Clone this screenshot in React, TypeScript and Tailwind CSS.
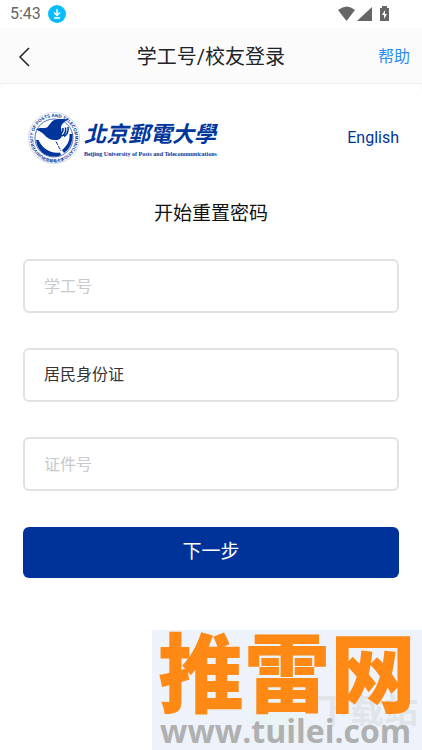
import React from 'react';

const SealLogo: React.FC = () => (
  <svg viewBox="0 0 52 52" className="size-[52px] shrink-0 overflow-visible" role="img" aria-label="BUPT">
    <defs>
      <path id="seal-top" d="M15.500 44.200 A21 21 0 1 1 36.500 44.200" />
      <path id="seal-bottom" d="M13.500 47 A24.500 24.500 0 0 0 38.500 47" />
    </defs>
    <circle cx="26" cy="26" r="25.500" fill="none" stroke="#9fb4dd" strokeWidth="0.500" />
    <text fill="#00369b" fontFamily="Liberation Sans Narrow, Liberation Sans, sans-serif" fontSize="4.500" fontWeight="700">
      <textPath href="#seal-top">UNIVERSITY OF POSTS AND TELECOMMUNICATIONS</textPath>
    </text>
    <text fill="#00369b" fontFamily="Noto Sans CJK SC, sans-serif" fontSize="4" fontWeight="700">
      <textPath href="#seal-bottom">北京邮电大学</textPath>
    </text>
    <circle cx="26" cy="26" r="19" fill="none" stroke="#00369b" strokeWidth="0.700" />
    <path
      fill="#00369b"
      d="M8 17.500 C12 15 16 16.500 19 15.500 C22 13 23 8.500 28 7.500 C33 6.500 37 7.500 41 7 C37.500 9 34 11 33 15 L34 23 C34 26 31 28 28 28 C23 28.500 19 26 16 22.500 C14 20 11 19 8 17.500Z"
    />
    <path
      fill="none"
      stroke="#00369b"
      strokeWidth="1.500"
      d="M33 21.500 Q35.500 19.500 35 16 M34 24 Q38.500 21.500 37.500 15.500 M36 24.500 Q41 21.500 40 15"
    />
    <path
      fill="#00369b"
      d="M8 28 C9 38 16 44.500 26 44.500 C29 44.500 31 44 33 43 L32 40.500 C22 42 14 36 10.500 28Z M41.500 22 L44.500 22 C45 30 42 37 36 41 L34 38 C39 34 42 29 41.500 22Z"
    />
    <path stroke="#00369b" strokeWidth="1" d="M28 29.500 L33 39" strokeDasharray="4 1" />
  </svg>
);

const StatusBar: React.FC = () => (
  <div className="flex h-7 items-center justify-between bg-white pl-[10px] pr-[32px]">
    <div className="flex items-center gap-[7px]">
      <span className="font-[Roboto,sans-serif] text-base text-[#666666]">5:43</span>
      <svg viewBox="0 0 18 18" className="size-[18px]">
        <circle cx="9" cy="9" r="9" fill="#08bdff" />
        <path d="M9 4v6M6 7.500l3 3 3-3M6 13h6" fill="none" stroke="#fff" strokeWidth="1.400" />
      </svg>
    </div>
    <svg viewBox="0 0 52 16" className="h-4 w-[52px]" fill="#666666">
      <path d="M0 4 Q9 -3 17 4 L8.500 15Z" />
      <path d="M34 1 V15 H19Z" />
      <path d="M44 0h5v2h2v13h-9V2h2Z" />
      <path d="M47 4l-3 5h2v4l3-5h-2Z" fill="#fff" />
    </svg>
  </div>
);

const fieldClass =
  'block h-[54px] w-full appearance-none rounded-md border-2 border-[#e2e2e2] bg-white px-[19px] text-base text-[#333333] outline-none placeholder:text-[#c8c9cc]';

const App: React.FC = () => {
  return (
    <div className="flex min-h-screen flex-col bg-[#fbfbfb] font-[Roboto,'Noto_Sans_CJK_SC',sans-serif]">
      <StatusBar />
      <header className="grid h-14 grid-cols-[1fr_auto_1fr] items-center border-b border-[#f0f0f0] bg-[#fbfbfb] px-3 pt-[2px]">
        <button type="button" aria-label="返回" className="justify-self-start px-[6px]">
          <svg viewBox="0 0 12 20" className="h-5 w-3" fill="none" stroke="#222" strokeWidth="1.500">
            <path d="M11 1 L2 10 L11 19" />
          </svg>
        </button>
        <h1 className="text-[20px] text-[#202329]">学工号/校友登录</h1>
        <a href="#help" className="justify-self-end text-base text-[#2c8df4]">帮助</a>
      </header>

      <main className="relative flex-1 rounded-t-lg bg-white px-[23px] pt-7">
        <div className="flex items-center justify-between">
          <div className="flex items-start gap-1 pl-[5px] text-[#00369b]">
            <SealLogo />
            <div className="whitespace-nowrap pt-1">
              <div className="font-['Noto_Sans_CJK_TC',sans-serif] text-[22px] font-bold italic leading-8">北京郵電大學</div>
              <div className="font-['Liberation_Serif',serif] text-[6px] font-bold leading-3">
                Beijing University of Posts and Telecommunications
              </div>
            </div>
          </div>
          <a href="#english" className="text-base text-[#00369b]">English</a>
        </div>

        <h2 className="mt-9 text-center text-[19px] leading-7 text-[#111111]">开始重置密码</h2>

        <form className="mt-[31px]">
          <div className="flex flex-col gap-[35px]">
            <input type="text" aria-label="学工号" placeholder="学工号" className={fieldClass} />
            <select aria-label="证件类型" className={fieldClass}>
              <option>居民身份证</option>
            </select>
            <input type="text" aria-label="证件号" placeholder="证件号" className={fieldClass} />
          </div>
          <button type="button" className="mt-9 h-[51px] w-full rounded-md bg-[#003399] text-[19px] text-white">
            下一步
          </button>
        </form>

        {/* site watermark */}
        <div className="absolute bottom-0 right-0 h-[120px] w-[270px] overflow-hidden bg-[#eef3fb]">
          <div className="absolute bottom-2 left-[100px] h-12 w-[50px] rounded-full bg-[#eaf3f5]" />
          <div className="absolute bottom-[22px] right-1 text-[34px] font-bold leading-none text-[#e0e5ea]">下载站</div>
          <div className="relative whitespace-nowrap pl-[6px] pt-1 text-[86px] font-black leading-[86px] text-[#ff8915]">推雷网</div>
          <div className="relative pl-2 font-['Open_Sans',sans-serif] text-[32px] font-bold leading-[22px] text-[#b0b0b0]">www.tuilei.com</div>
        </div>
      </main>
    </div>
  );
};

export default App;
